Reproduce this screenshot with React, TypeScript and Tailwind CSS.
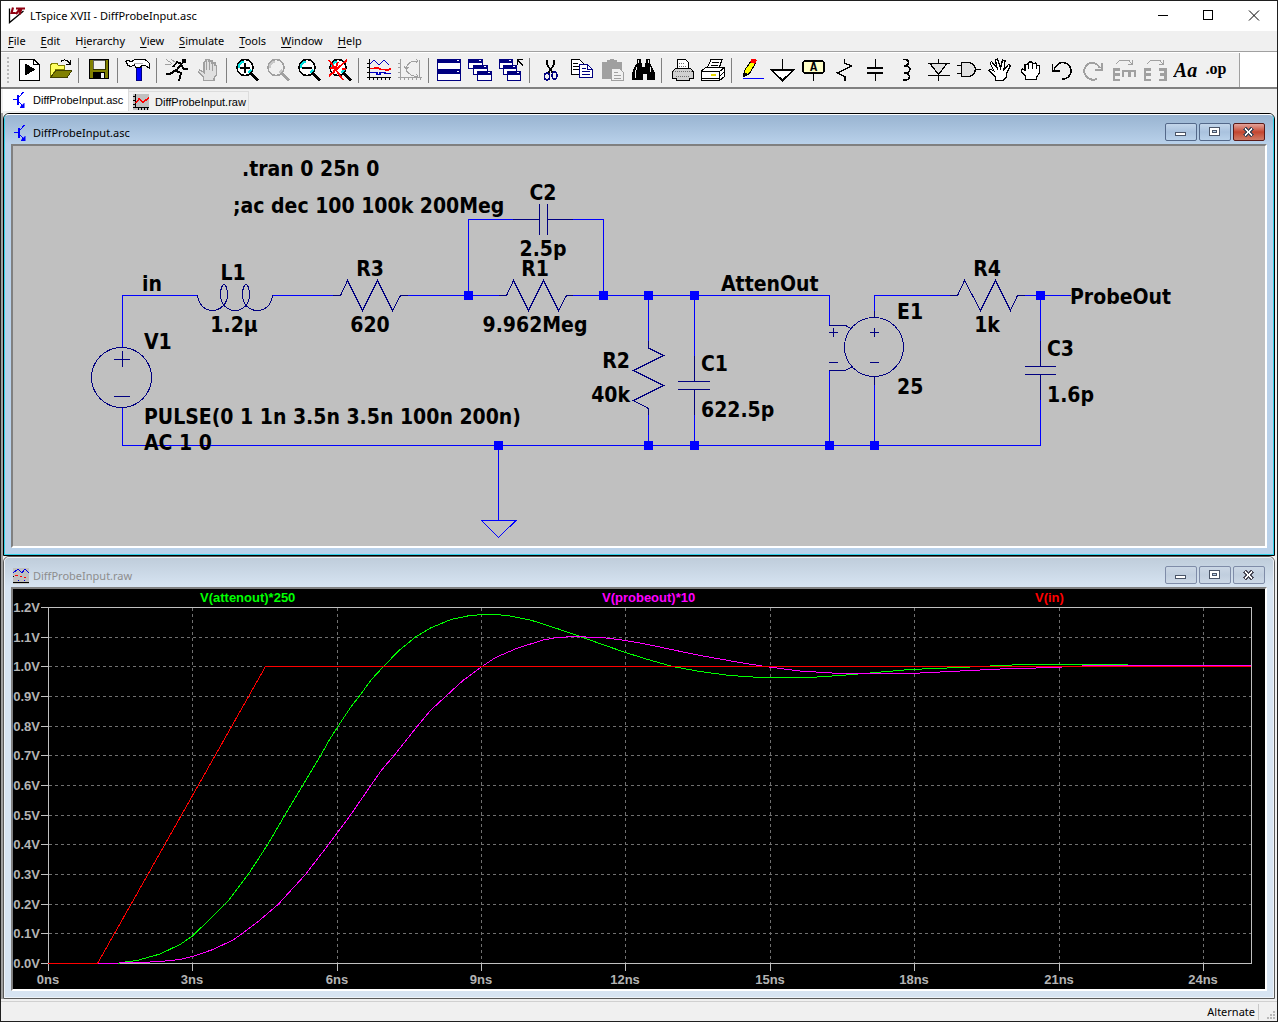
import React from 'react';

const BLUE = '#0000ff';
const NAVY = '#000080';
const GREY = '#a0a0a0';

const menus = [
  { label: 'File', key: 0 },
  { label: 'Edit', key: 0 },
  { label: 'Hierarchy', key: 1 },
  { label: 'View', key: 0 },
  { label: 'Simulate', key: 0 },
  { label: 'Tools', key: 0 },
  { label: 'Window', key: 0 },
  { label: 'Help', key: 0 },
];

/* ---------- toolbar glyphs, all on a 25x25 grid ---------- */

function Lens({ grey = false, children }: { grey?: boolean; children?: React.ReactNode }) {
  const c = grey ? GREY : '#000';
  return (
    <>
      <circle cx="11" cy="9.5" r="8" fill={grey ? '#f0f0f0' : '#fff'} stroke={c} strokeWidth="1.6" />
      <path d="M5 10V7l3-3h2M14 15l3-3" stroke={grey ? '#c8c8c8' : '#00e0e0'} strokeWidth="1.6" />
      <path d="M17 15.5l7 7" stroke={c} strokeWidth="3" />
      {children}
    </>
  );
}

function MiniWindow({ x, y, w, h }: { x: number; y: number; w: number; h: number }) {
  return (
    <>
      <rect x={x + 0.5} y={y + 0.5} width={w - 1} height={h - 1} fill="#fff" stroke={NAVY} />
      <rect x={x} y={y} width={w} height="4" fill={NAVY} />
      <path d={`M${x + w - 4} ${y + 1.5}h2`} stroke="#fff" />
    </>
  );
}

const glyphs = {
  run: (
    <>
      <path d="M3.5 1.5H18l5 5V22.5H3.5z" fill="#fff" stroke="#000" />
      <path d="M17.5 1.5V6.5H23" stroke="#000" />
      <path d="M8.5 5v13l11-6.5z" fill="#000" />
    </>
  ),
  open: (
    <>
      <path d="M3.5 19.5V7l2-2h4l2 2.5h6v4H9z" fill="#ffff60" stroke="#808000" />
      <path d="M3.5 19.5L9 12.5h16l-5 7z" fill="#808000" stroke="#404000" />
      <path d="M14 4c1-3 6-3 9 1.5M23.5 1.5V6.5H19" stroke="#000" />
    </>
  ),
  save: (
    <>
      <rect x="3.5" y="1.5" width="19" height="19" fill="#808000" stroke="#000" />
      <rect x="7" y="2" width="12" height="9" fill="#f0f0f0" stroke="#000" strokeWidth="0.6" />
      <rect x="7" y="14" width="12" height="7" fill="#000" />
      <rect x="15" y="15" width="3" height="5" fill="#f0f0f0" />
    </>
  ),
  hammer: (
    <>
      <path d="M11 9h5v13.500h-5z" fill="#0000ff" stroke="#000080" />
      <path d="M1 3.500l2-1.500 3 2 4-2.500h9q4 1 5.500 4.500v4l-2-1q-2.500-2-6-1.500l-1 2h-5L9.500 7 6 8.500 3 7.500z" fill="#fff" stroke="#000" />
      <path d="M9 5.500h9" stroke="#b0b0b0" />
    </>
  ),
  runner: (
    <>
      <path d="M18 1h4v4h-4z" fill="#000" />
      <path d="M18 5l-6 8 5 2-2 8M12 12L6 16H1.500M18 6l-5-2-4 5M17 7l3 4h4" stroke="#000" strokeWidth="2" />
      <path d="M2 1.500l6 4M1 6h6M7 1.500l5 3" stroke={GREY} />
    </>
  ),
  halt: (
    <>
      <path d="M8.500 22.500V19L3.500 14l1-2L9 14.500V4l2-1V1.500h3V3h3v2h3v2.500l1.500.5V17L19 20v2.500z" fill="#e0e0e0" stroke={GREY} strokeWidth="1.3" />
      <path d="M11.500 3v9M14.500 3v9M17.500 5v8" stroke={GREY} strokeWidth="1.3" />
    </>
  ),
  zoomIn: (
    <Lens>
      <path d="M6 9.500h10M11 4.500v10" stroke="#000" strokeWidth="2" />
    </Lens>
  ),
  zoomPan: <Lens grey />,
  zoomOut: (
    <Lens>
      <path d="M6 9.500h10" stroke="#000" strokeWidth="2" />
    </Lens>
  ),
  zoomFit: (
    <Lens>
      <path d="M2 2l14 20M20 2L2 18M3 10h6M15 11h4M11 4l-5 12" stroke="#ff0000" strokeWidth="1.8" />
    </Lens>
  ),
  autorange: (
    <>
      <path d="M3.500 1v21M1 19.500h24M1 5.500h2M1 9.500h2M1 14.500h2M7.500 20v2M11.500 20v2M15.500 20v2M19.500 20v2M23.500 20v2" stroke="#000" />
      <path d="M4 6l4-4 5 5 5-5 5 5" stroke="#0000c0" />
      <path d="M4 10.500h4l3-1 4 2h4l2 1 4-2" stroke="#ff0000" strokeWidth="1.6" />
      <path d="M4 14.500h7v2h3v-2h5v1h6" stroke="#0000c0" strokeWidth="1.3" />
    </>
  ),
  nyquist: (
    <>
      <path d="M3.500 1v21M1 19.500h24M1 5.500h2M1 9.500h2M1 14.500h2M7.500 20v2M11.500 20v2M15.500 20v2M19.500 20v2M23.500 20v2" stroke={GREY} />
      <path d="M22.500 2v17M21 3h-5q-6 2-7 8q1 5 8 7h4M7 8l2 3 3-2M19 1l2 2-2 2M19 16l2 2-2 2" stroke={GREY} />
    </>
  ),
  tile: (
    <>
      <MiniWindow x={1} y={1} w={24} h={11} />
      <MiniWindow x={1} y={12} w={24} h={11} />
    </>
  ),
  cascade: (
    <>
      <MiniWindow x={1} y={1} w={15} h={10} />
      <MiniWindow x={6} y={7} w={15} h={10} />
      <MiniWindow x={10} y={13} w={15} h={10} />
    </>
  ),
  closeAll: (
    <>
      <MiniWindow x={1} y={1} w={14} h={10} />
      <MiniWindow x={5} y={7} w={14} h={10} />
      <MiniWindow x={9} y={13} w={14} h={10} />
      <path d="M19.500 7V1.500H25M20 2l5 6" stroke="#000" strokeWidth="1.3" />
    </>
  ),
  cut: (
    <>
      <path d="M10 1.500v5l6 9M17 1.500v5l-6 9" stroke="#000" strokeWidth="1.6" />
      <ellipse cx="10" cy="18.500" rx="2.500" ry="3.500" stroke={NAVY} strokeWidth="1.5" />
      <ellipse cx="17.500" cy="17.500" rx="2.500" ry="3.500" stroke={NAVY} strokeWidth="1.5" />
    </>
  ),
  copy: (
    <>
      <path d="M3.500 1.500h8l4 4v11h-12z" fill="#fff" stroke="#000" />
      <path d="M5 5.500h5M5 8.500h7M5 11.500h7" stroke="#000" />
      <path d="M11.500 6.500h8l5 5v8h-13z" fill="#fff" stroke={NAVY} />
      <path d="M19.500 6.500v5h5M14 10.500h4M14 13.500h8M14 16.500h8" stroke={NAVY} />
    </>
  ),
  paste: (
    <>
      <path d="M3 4h5V2h3V1h4v1h3v2h5v17H3z" fill={GREY} />
      <path d="M12.500 10.500h8l4 4v8h-12z" fill="#f0f0f0" stroke={GREY} />
      <path d="M15 14.500h4M15 17.500h7M15 20h7" stroke={GREY} />
    </>
  ),
  find: (
    <>
      <path d="M7 1h4v4h1v4h3V5h1V1h4v4l3 6 2 4v7h-8v-6h-4v6H2v-7l2-5 3-5z" fill="#000" />
      <path d="M8.500 2v3M18.500 2v3M7 9l-2 6v5M20 9l1 5" stroke="#f0f0f0" />
    </>
  ),
  printSetup: (
    <>
      <path d="M8.500 10.500v-9h8l3 3v6z" fill="#fff" stroke="#000" />
      <path d="M3.500 20v-6l3-3.500h15l3 3.500v6h-4v2.500h-13V20z" fill="#d0d0d0" stroke="#000" />
      <path d="M10 5.500h6M10 8h8M4 13.500h20M7 18.500h14" stroke="#707070" strokeDasharray="1 1" />
    </>
  ),
  print: (
    <>
      <path d="M7 10.500l4-9h11l-3 9z" fill="#fff" stroke="#000" />
      <path d="M12 4.500h7M11 7.500h7" stroke="#000" />
      <path d="M1.500 13l4-3.500h19v9l-5 4h-18z" fill="#fff" stroke="#000" />
      <path d="M1.500 13.500h18M19.500 22.500v-9l5-4M20 18l4-4M1.500 20h18" stroke="#000" />
      <path d="M11 16.500h5" stroke="#e8d800" strokeWidth="2" />
    </>
  ),
  wire: (
    <>
      <path d="M4.500 18.500l1-6 7-10 4 3-6 10z" fill="#ffff00" stroke="#000" />
      <path d="M4.500 18.500l.5-5 4 3z" fill="#000" />
      <path d="M11 4l2-3.500h3l1.500 2-1.500 3.500z" fill="#ff0000" />
      <path d="M4 20.500h21" stroke={BLUE} />
    </>
  ),
  ground: (
    <>
      <path d="M12.500 1v11" stroke="#000" />
      <path d="M1.500 12h22L12.500 22.500z" fill="#fff" stroke="#000" strokeWidth="1.6" />
    </>
  ),
  label: (
    <>
      <rect x="2" y="3" width="21" height="12" rx="2" fill="#ffffc8" stroke="#000" strokeWidth="1.6" />
      <text x="12.5" y="13" textAnchor="middle" fontFamily="Liberation Mono, monospace" fontWeight="700" fontSize="12" fill="#000">A</text>
      <path d="M12.500 15v8" stroke="#000" />
    </>
  ),
  resistor: <path d="M12.500 1v4l7 3L5 15l8 3.500V22.500" stroke="#000" strokeWidth="1.3" />,
  capacitor: (
    <>
      <path d="M12.500 1v8M12.500 15v8" stroke="#000" />
      <path d="M4 10h16M4 15h16" stroke="#000" strokeWidth="2" />
    </>
  ),
  inductor: <path d="M9 1.500c6-1 8 6 1 6.500c8-1 8 7 0 7c8 0 7 8-1 7" stroke="#000" strokeWidth="1.5" />,
  diode: (
    <>
      <path d="M13.500 1v22M2.500 5.500h22M2.500 17.500h22" stroke="#000" strokeWidth="1.3" />
      <path d="M5 5.500h17l-8.500 11z" fill="#e0e0e0" stroke="#000" strokeWidth="1.3" />
    </>
  ),
  gate: (
    <>
      <path d="M1 7.500h5M1 15.500h5M19 11.500h6" stroke="#000" strokeWidth="1.3" />
      <path d="M5.500 4.500h7q6 1 7 7q-1 6-7 7h-7z" fill="#e0e0e0" stroke="#000" strokeWidth="1.3" />
    </>
  ),
  move: (
    <path d="M8.500 22.500V19L2 13l1-2 4 2L3 5l1.500-1.500L10 10 8.500 2l2-1 3 9 2-8 2.500.5-1 9 4.500-5 2 1.500-4 7v4l-3 3.500z" fill="#fff" stroke="#000" strokeWidth="1.3" />
  ),
  drag: (
    <>
      <path d="M7.500 21.500V18L3 13l1-2 3 1V7l3-1 1-2h3l1 1.500 3-.5 1 2.500 2.500.5V15l-3 4v2.500z" fill="#fff" stroke="#000" strokeWidth="1.3" />
      <path d="M10.500 6v5M14.500 5v6M18.500 7v4" stroke="#000" strokeWidth="1.3" />
    </>
  ),
  undo: (
    <>
      <path d="M5 11.500C9 3 16 3 20 7.500c5 6 0 14-7 13.500" stroke="#000" strokeWidth="1.5" />
      <path d="M3.500 6v7H11" stroke="#000" strokeWidth="1.8" />
    </>
  ),
  redo: (
    <>
      <path d="M20 10C16 3 9 4 6 8c-5 7 2 16 11 13" stroke={GREY} strokeWidth="2" />
      <path d="M22 5v6.500H15" stroke={GREY} strokeWidth="2" />
    </>
  ),
  rotate: (
    <>
      <path d="M5 6l4-4h9l3 5M17 6.500h4.500V2" stroke={GREY} />
      <path d="M9 11.500H3V22h6M3 16.500h6" stroke={GREY} strokeWidth="2.5" />
      <path d="M12 19V13H25M18.500 13v6M24 13v6" stroke={GREY} strokeWidth="2.5" />
    </>
  ),
  mirror: (
    <>
      <path d="M5 6l4-4h9l3 5M17 6.500h4.500V2" stroke={GREY} />
      <path d="M9 11.500H3V22h6M3 16.500h6" stroke={GREY} strokeWidth="2.5" />
      <path d="M17 11.500h6.500V22H17M18 16.500h6" stroke={GREY} strokeWidth="2.5" />
    </>
  ),
  text: (
    <text x="12.5" y="19" textAnchor="middle" fontFamily="Liberation Serif, serif" fontStyle="italic" fontWeight="700" fontSize="20" fill="#000">Aa</text>
  ),
  op: (
    <text x="12" y="16" textAnchor="middle" fontFamily="Liberation Serif, serif" fontWeight="700" fontSize="16" fill="#000">.op</text>
  ),
};

const toolGroups: { name: keyof typeof glyphs; label: string; off?: boolean }[][] = [
  [{ name: 'run', label: 'New Schematic' }, { name: 'open', label: 'Open' }],
  [{ name: 'save', label: 'Save' }],
  [{ name: 'hammer', label: 'Control Panel' }],
  [{ name: 'runner', label: 'Run' }, { name: 'halt', label: 'Halt', off: true }],
  [
    { name: 'zoomIn', label: 'Zoom In' },
    { name: 'zoomPan', label: 'Pan', off: true },
    { name: 'zoomOut', label: 'Zoom Out' },
    { name: 'zoomFit', label: 'Zoom to Fit' },
  ],
  [{ name: 'autorange', label: 'Autorange' }, { name: 'nyquist', label: 'Nyquist', off: true }],
  [
    { name: 'tile', label: 'Tile Windows' },
    { name: 'cascade', label: 'Cascade Windows' },
    { name: 'closeAll', label: 'Close All' },
  ],
  [
    { name: 'cut', label: 'Cut' },
    { name: 'copy', label: 'Copy' },
    { name: 'paste', label: 'Paste', off: true },
    { name: 'find', label: 'Find' },
  ],
  [{ name: 'printSetup', label: 'Print Setup' }, { name: 'print', label: 'Print' }],
  [
    { name: 'wire', label: 'Wire' },
    { name: 'ground', label: 'Ground' },
    { name: 'label', label: 'Label Net' },
    { name: 'resistor', label: 'Resistor' },
    { name: 'capacitor', label: 'Capacitor' },
    { name: 'inductor', label: 'Inductor' },
    { name: 'diode', label: 'Diode' },
    { name: 'gate', label: 'Component' },
    { name: 'move', label: 'Move' },
    { name: 'drag', label: 'Drag' },
    { name: 'undo', label: 'Undo' },
    { name: 'redo', label: 'Redo', off: true },
    { name: 'rotate', label: 'Rotate', off: true },
    { name: 'mirror', label: 'Mirror', off: true },
    { name: 'text', label: 'Text' },
    { name: 'op', label: 'SPICE Directive' },
  ],
];

function Toolbar() {
  return (
    <div className="flex h-[36px] border-b-2 border-[#808080] bg-white">
      <div className="flex items-center border-r border-[#a0a0a0] bg-[#f0f0f0] pr-[7px] pl-[6px]" role="toolbar">
        <div className="mr-[4px] h-[26px] border-l-2 border-dotted border-[#b8b8b8]" />
        {toolGroups.map((group, i) => (
          <div key={i} className="flex items-center">
            {i > 0 && <div className="mx-[3px] h-[25px] w-[2px] border-l border-[#808080]" />}
            {group.map((tool) => (
              <button key={tool.name} type="button" aria-label={tool.label} disabled={tool.off} className="flex h-[33px] w-[31px] items-center justify-center">
                <svg width="25" height="25" viewBox="0 0 25 25" fill="none" shapeRendering="crispEdges">
                  {glyphs[tool.name]}
                </svg>
              </button>
            ))}
          </div>
        ))}
      </div>
    </div>
  );
}

/* ---------- small document icons ---------- */

function SchematicIcon() {
  return (
    <svg width="16" height="16" viewBox="0 0 16 16" fill="none" stroke={BLUE} shapeRendering="crispEdges">
      <path d="M1 7.500h5M11.500 0L6 6M6 9l6 6.500" />
      <path d="M6 3v10" strokeWidth="2" />
      <path d="M12 11v4.500H8z" fill={BLUE} strokeWidth="0.5" />
    </svg>
  );
}

function RawIcon() {
  return (
    <svg width="16" height="16" viewBox="0 0 16 16" fill="none" shapeRendering="crispEdges">
      <rect width="16" height="16" fill="#c0c0c0" />
      <path d="M2.500 0v14M0 13.500h16M0 2.500h2M0 6.500h2M0 10.500h2M5.500 14v2M8.500 14v2M11.500 14v2M14.500 14v2" stroke="#000" />
      <path d="M3 9l3-4 4 3 6-4" stroke="#ff0000" strokeWidth="1.5" />
    </svg>
  );
}

function PlotIcon() {
  return (
    <svg width="16" height="16" viewBox="0 0 16 16" fill="none" shapeRendering="crispEdges">
      <rect width="16" height="16" fill="#c0c0c0" />
      <path d="M0 5l5-4 4 4 3-4 4 4" stroke="#0000e0" />
      <path d="M2 7.500h3M7 8.500h2M11 9.500h2" stroke="#ff0000" strokeWidth="1.5" />
      <path d="M5.500 12v1M11.500 12v1" stroke="#0000e0" />
      <path d="M0 14.500h16M0 8.500h1" stroke="#000" />
    </svg>
  );
}

/* ---------- MDI child window ---------- */

function CaptionButton({ kind, active }: { kind: 'min' | 'max' | 'close'; active: boolean }) {
  const red = kind === 'close' && active;
  const tone = red
    ? 'border-[#5a1a18] from-[#e3a39b] via-[#c4452f] to-[#cf7a66]'
    : active
      ? 'border-[#54698a] from-[#c3d6ea] via-[#a9c2de] to-[#b9d1ea]'
      : 'border-[#7f8ca8] from-[#cbd7e5] via-[#c0cede] to-[#ccd8e6]';
  return (
    <button type="button" aria-label={kind} className={`flex h-[18px] w-[32px] items-center justify-center rounded-[2px] border bg-gradient-to-b ${tone}`}>
      <svg width="14" height="12" viewBox="0 0 14 12" fill="none" shapeRendering="crispEdges">
        {kind === 'min' && <rect x="1.500" y="6.500" width="10" height="3" fill="#fff" stroke="#4a5568" />}
        {kind === 'max' && (
          <>
            <rect x="1.500" y="1.500" width="10" height="8" fill="#fff" stroke="#4a5568" />
            <rect x="4.500" y="4.500" width="4" height="2" fill="#b9d1ea" stroke="#4a5568" />
          </>
        )}
        {kind === 'close' && (
          <>
            <path d="M2.500 2l8 8M10.500 2l-8 8" stroke="#4a4a58" strokeWidth="4" />
            <path d="M3 2.500l7 7M10 2.500l-7 7" stroke="#fff" strokeWidth="2" />
          </>
        )}
      </svg>
    </button>
  );
}

function ChildWindow({ title, icon, active, children }: { title: string; icon: React.ReactNode; active: boolean; children: React.ReactNode }) {
  return (
    <section className={`rounded-t-[6px] border ${active ? 'border-black' : 'border-[#5a5a5a]'}`}>
      <div className={`rounded-t-[5px] border px-[6px] pb-[6px] ${active ? 'border-[#2fd0e8] border-t-white bg-[#b9d1ea]' : 'border-[#eef3f8] bg-[#d7e4f2]'}`}>
        <header className={`-mx-[6px] flex h-[29px] items-end gap-[2px] rounded-t-[4px] bg-gradient-to-b px-[8px] pb-[3px] ${active ? 'from-[#99b4d1] to-[#b9d1ea]' : 'from-[#bfcddb] to-[#d7e4f2]'}`}>
          <span className="flex h-[16px] flex-1 items-center gap-[4px]">
            {icon}
            <span className={`text-[11px] leading-[16px] ${active ? 'text-black' : 'text-[#8d8d8d]'}`}>{title}</span>
          </span>
          <CaptionButton kind="min" active={active} />
          <CaptionButton kind="max" active={active} />
          <CaptionButton kind="close" active={active} />
        </header>
        <div className="border-2 border-t-[#808080] border-r-white border-b-white border-l-[#808080]">{children}</div>
      </div>
    </section>
  );
}

/* ---------- schematic ---------- */

const nodes = [
  [468, 295], [603, 295], [648, 295], [694, 295], [1040, 295],
  [498, 445], [648, 445], [694, 445], [829, 445], [874, 445],
];

const labels: [string, number, number, ('start' | 'middle' | 'end')?][] = [
  ['.tran 0 25n 0', 242, 176],
  [';ac dec 100 100k 200Meg', 233, 213],
  ['in', 142, 291],
  ['L1', 233, 280, 'middle'],
  ['1.2µ', 234, 332, 'middle'],
  ['R3', 370, 276, 'middle'],
  ['620', 370, 332, 'middle'],
  ['V1', 144, 349],
  ['PULSE(0 1 1n 3.5n 3.5n 100n 200n)', 144, 424],
  ['AC 1 0', 144, 450],
  ['C2', 543, 200, 'middle'],
  ['2.5p', 543, 256, 'middle'],
  ['R1', 535, 276, 'middle'],
  ['9.962Meg', 535, 332, 'middle'],
  ['R2', 630, 368, 'end'],
  ['40k', 630, 402, 'end'],
  ['C1', 701, 371],
  ['622.5p', 701, 417],
  ['AttenOut', 721, 291],
  ['E1', 897, 319],
  ['25', 897, 394],
  ['R4', 987, 276, 'middle'],
  ['1k', 987, 332, 'middle'],
  ['C3', 1047, 356],
  ['1.6p', 1047, 402],
  ['ProbeOut', 1070, 304],
];

function Schematic() {
  return (
    <svg viewBox="13 146 1252 400" preserveAspectRatio="xMinYMin meet" className="block h-[400px] w-full bg-[#c0c0c0]" fill="none">
      <g stroke={BLUE} shapeRendering="crispEdges">
        <path d="M122.500 347V295.500H197M272 295.500H333M408 295.500H499M468.500 295V219.500H513M573 219.500H603.500V295M573 295.500H829.500V325" />
        <path d="M122.500 407V445.500H1040.500V400M648.500 295V341M648.500 415V445M694.500 295V356M694.500 415V445" />
        <path d="M829.500 371V445M874.500 311V295.500H950M874.500 385V445M1025 295.500H1071M1040.500 295V341" />
        <path d="M498.500 445V520" />
        <path d="M481.500 520.500H516L498.500 537.500z" />
      </g>
      <g stroke={NAVY} shapeRendering="crispEdges">
        {/* V1 */}
        <circle cx="121.500" cy="377.500" r="30" />
        <path d="M114 359.500H130M122.500 351V367M114 396.500H130" />
        {/* L1 */}
        <path d="M197.500 295.500C199 305 205 310.500 212 310.500C220 310.500 227.500 304 227.500 295C227.500 288 225.500 284.500 224 284.500C222 284.500 220.500 289 220.500 295C220.500 304 227 310.500 235 310.500C243 310.500 249.500 304 249.500 295C249.500 288 247.500 284.500 246 284.500C244 284.500 242.500 289 242.500 295C242.500 304 249 310.500 257.500 310.500C265 310.500 271.500 305 272.500 295.500" />
        {/* R3, R1, R4 */}
        <path d="M333 295.500H340.500L347.500 280.500L362.500 310.500L377.500 280.500L392.500 310.500L400.500 295.500H408" />
        <path d="M499 295.500H506.500L513.500 280.500L528.500 310.500L543.500 280.500L558.500 310.500L566.500 295.500H573" />
        <path d="M950 295.500H957.500L964.500 280.500L980.500 310.500L995.500 280.500L1010.500 310.500L1017.500 295.500H1025" />
        {/* R2 */}
        <path d="M648.500 341V348L663.500 355.500L633.500 370.500L663.500 385.500L633.500 400.500L648.500 408.500V415" />
        {/* C2, C1, C3 */}
        <path d="M513 219.500H539.500M539.500 204V235M547.500 204V235M547.500 219.500H573" />
        <path d="M694.500 356V381M678 381.500H710M678 389.500H710M694.500 390V415" />
        <path d="M1040.500 341V366M1025 366.500H1056M1025 374.500H1056M1040.500 375V400" />
        {/* E1 */}
        <circle cx="874" cy="347" r="29.500" />
        <path d="M829 325.500H845.500L852.500 329.500M829 370.500H845.500L852.500 366.500M874.500 311V317M874.500 376V385" />
        <path d="M829 332.500H838M833.500 328V337M829 362.500H838M870 332.500H879M874.500 328V337M870 362.500H879" />
      </g>
      <g fill={BLUE}>
        {nodes.map(([x, y]) => (
          <rect key={`${x}-${y}`} x={x - 4} y={y - 4} width="9" height="9" />
        ))}
      </g>
      <g fill="#000" fontFamily="'DejaVu Sans Condensed', 'Noto Sans', sans-serif" fontWeight="700" fontSize="21">
        {labels.map(([text, x, y, anchor]) => (
          <text key={text} x={x} y={y} textAnchor={anchor ?? 'start'}>{text}</text>
        ))}
      </g>
    </svg>
  );
}

/* ---------- waveform plot ---------- */

const voltRows = ['1.2V', '1.1V', '1.0V', '0.9V', '0.8V', '0.7V', '0.6V', '0.5V', '0.4V', '0.3V', '0.2V', '0.1V', '0.0V'];
const timeCols = ['0ns', '3ns', '6ns', '9ns', '12ns', '15ns', '18ns', '21ns', '24ns'];

const rowY = (i: number) => Math.floor(607.5 + i * 29.66) + 0.5;
const colX = (i: number) => Math.round(48 + i * 144.37) + 0.5;

const attenOut =
  '97,963.5 119,963.5 121,962.5 137,960.5 160,954 180,944.5 192.5,936 213,916 229,900 248.5,874 268,844 285.5,814 303.5,784 321,755 329,740.5 338.5,725.5 351.5,706 359.5,696 371,680 383.5,666.5 399,650.5 415.5,637 430.5,628 451,619.5 467.5,616 481.5,614.5 493.5,614.5 508,615.5 532,620.5 558.5,629 580,636.5 602.5,644.5 625.5,652.5 648,659.5 672.5,666.5 700,671.5 730,675.5 760,677.5 810,677.5 840,675.5 870,673 910,669.5 960,667.5 1000,665.5 1025,664.5 1127,664.5 1128,665.5 1251,665.5';
const probeOut =
  '97,963.5 141,962.5 160,961.5 180,959.5 192.5,956.5 213,949.5 233,940 243,933 257,922.5 278,904.5 305,875 329,844 337.5,832.5 350.5,815 371.5,784.5 382,769.5 394.5,755 417.5,726 430.5,710.5 445.5,696.5 463,680.5 482,666.5 495.5,657.5 516.5,648.5 543,640 557,637.5 576,636.5 606,638 625.5,640.5 648,644.5 669,649 700,655.5 740,662.5 765,666.5 800,671 840,673.5 910,673.5 960,671 1000,669 1020,668.5 1053,667.5 1092,665.5 1251,665.5';

function Plot() {
  return (
    <svg viewBox="13 589 1252 400" preserveAspectRatio="xMinYMin meet" className="block h-[400px] w-full bg-black" fill="none">
      <g shapeRendering="crispEdges">
        <g stroke="#707070" strokeDasharray="3 3">
          {voltRows.slice(1, -1).map((v, i) => (
            <path key={v} d={`M49 ${rowY(i + 1)}H1251`} />
          ))}
          {timeCols.slice(1).map((t, i) => (
            <path key={t} d={`M${colX(i + 1)} 608V963`} />
          ))}
        </g>
        <g stroke="#c0c0c0">
          <path d="M48.500 607.500H1251.500V963.500H48.500z" />
          {voltRows.map((v, i) => (
            <path key={v} d={`M41 ${rowY(i)}H48`} />
          ))}
          {timeCols.map((t, i) => (
            <path key={t} d={`M${colX(i)} 964V971`} />
          ))}
        </g>
        <polyline points={attenOut} stroke="#00ff00" />
        <polyline points={probeOut} stroke="#ff00ff" />
        <polyline points="48,963.5 97.5,963.5 265.5,666.5 1251,666.5" stroke="#ff0000" />
      </g>
      <g fontFamily="'Liberation Sans', Arial, sans-serif" fontWeight="700" fontSize="13">
        <g fill="#b4b4b4">
          {voltRows.map((v, i) => (
            <text key={v} x="40" y={rowY(i) + 4.5} textAnchor="end">{v}</text>
          ))}
          {timeCols.map((t, i) => (
            <text key={t} x={colX(i) - 0.5} y="984" textAnchor="middle">{t}</text>
          ))}
        </g>
        <text x="200" y="602" fill="#00ff00">V(attenout)*250</text>
        <text x="602" y="602" fill="#ff00ff">V(probeout)*10</text>
        <text x="1035" y="602" fill="#ff0000">V(in)</text>
      </g>
    </svg>
  );
}

/* ---------- application frame ---------- */

function TitleBar() {
  return (
    <div className="flex h-[30px] items-center bg-white pl-[7px]">
      <svg width="18" height="18" viewBox="0 0 18 18" fill="none">
        <path d="M1.500 1.500v14L15.500 4" stroke="#000" strokeWidth="1.3" />
        <path d="M5 .500L3.500 6h4M8 1.500h9M13.500 1.500L11.500 7.500M8 7l4-5" stroke="#900010" strokeWidth="2.2" />
      </svg>
      <h1 className="ml-[4px] flex-1 text-[11px] leading-[16px]">LTspice XVII - DiffProbeInput.asc</h1>
      <button type="button" aria-label="Minimize" className="flex h-full w-[46px] items-center justify-center">
        <svg width="12" height="12" viewBox="0 0 12 12" fill="none" stroke="#000" shapeRendering="crispEdges"><path d="M2 5.500h10" /></svg>
      </button>
      <button type="button" aria-label="Maximize" className="flex h-full w-[46px] items-center justify-center">
        <svg width="12" height="12" viewBox="0 0 12 12" fill="none" stroke="#000" shapeRendering="crispEdges"><path d="M1.500.500h9v9h-9z" /></svg>
      </button>
      <button type="button" aria-label="Close" className="flex h-full w-[46px] items-center justify-center">
        <svg width="12" height="12" viewBox="0 0 12 12" fill="none" stroke="#000"><path d="M1 .5l10 10M11 .5l-10 10" /></svg>
      </button>
    </div>
  );
}

function MenuBar() {
  return (
    <nav className="flex h-[21px] items-center border-b border-[#a0a0a0]">
      {menus.map(({ label, key }) => (
        <button key={label} type="button" className="pr-[8px] pl-[7px] text-[11px] leading-[16px]">
          {label.slice(0, key)}
          <span className="underline underline-offset-2">{label[key]}</span>
          {label.slice(key + 1)}
        </button>
      ))}
    </nav>
  );
}

function Tabs() {
  return (
    <div className="flex h-[24px] items-start pl-[2px] font-['Liberation_Sans',sans-serif] text-[11px] leading-[16px]" role="tablist">
      <button type="button" role="tab" aria-selected="true" className="flex h-[22px] w-[126px] items-center gap-[5px] border-r border-[#dcdcdc] bg-white pl-[9px]">
        <SchematicIcon />
        DiffProbeInput.asc
      </button>
      <button type="button" role="tab" aria-selected="false" className="mt-[2px] flex h-[20px] items-center gap-[6px] border-t border-r border-[#dcdcdc] pr-[2px] pl-[4px]">
        <RawIcon />
        DiffProbeInput.raw
      </button>
    </div>
  );
}

export default function App() {
  return (
    <div className="flex min-h-screen flex-col border border-[#1f1f1f] bg-[#f0f0f0] font-['Noto_Sans','Open_Sans',sans-serif] text-black">
      <TitleBar />
      <MenuBar />
      <div className="border-t border-white">
        <Toolbar />
      </div>
      <Tabs />
      <main className="flex flex-col border-l-2 border-[#a0a0a0] pr-[2px]">
        <ChildWindow title="DiffProbeInput.asc" icon={<SchematicIcon />} active>
          <Schematic />
        </ChildWindow>
        <ChildWindow title="DiffProbeInput.raw" icon={<PlotIcon />} active={false}>
          <Plot />
        </ChildWindow>
      </main>
      <footer className="mt-[2px] flex flex-1 items-center justify-end border-t border-[#d0d0d0] text-[11px] leading-[16px]">
        <span className="border-r border-[#c8c8c8] pr-[3px]">Alternate</span>
        <svg width="18" height="18" viewBox="0 0 18 18" fill="#b8b8b8">
          <path d="M14 8h2v2h-2zM11 11h2v2h-2zM14 11h2v2h-2zM8 14h2v2H8zM11 14h2v2h-2zM14 14h2v2h-2z" />
        </svg>
      </footer>
    </div>
  );
}
